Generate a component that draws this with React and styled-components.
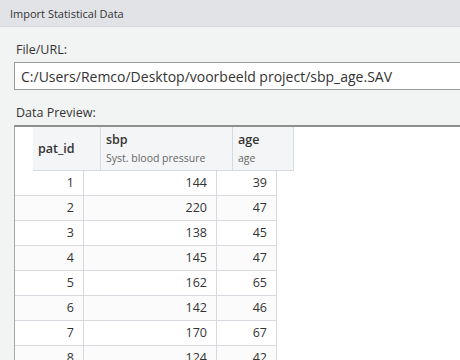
import React from 'react';
import styled, { createGlobalStyle } from 'styled-components';

const GlobalStyle = createGlobalStyle`
  html, body {
    margin: 0;
    padding: 0;
    background: #f2f3f3;
    font-family: "Open Sans", "Noto Sans", sans-serif;
    color: #333;
  }
`;

const Dialog = styled.div`
  width: 460px;
  height: 360px;
  overflow: hidden;
  background: #f2f3f3;
  display: flex;
  flex-direction: column;
`;

const TitleBar = styled.div`
  height: 26px;
  flex: none;
  background: #e2e3e7;
  border-bottom: 1px solid #d6d7da;
  display: flex;
  align-items: center;
  padding-left: 10px;
  font-size: 11px;
  color: #333;
`;

const Body = styled.div`
  padding: 14px 0 0 14px;
  display: flex;
  flex-direction: column;
`;

const Label = styled.div`
  font-size: 12.5px;
  color: #333;
  padding-left: 2px;
  height: 21px;
  line-height: 18px;
`;

const PathInput = styled.div`
  height: 26px;
  border: 1px solid #9a9a9a;
  border-right: none;
  background: #fff;
  display: flex;
  align-items: center;
  padding-left: 6px;
  font-size: 14px;
  color: #333;
  white-space: nowrap;
  margin-bottom: 14px;
`;

const Panel = styled.div`
  background: #fff;
  border-top: 2px solid #8e8e8e;
  border-left: 1px solid #a6a6a6;
  height: 260px;
  overflow: hidden;
`;

const HeaderRow = styled.div`
  display: flex;
  margin-left: 18px;
  height: 43px;
  background: #f4f5f6;
  border-bottom: 1px solid #d6dade;
  width: fit-content;
`;

const HeadCell = styled.div`
  width: ${(p) => p.$w}px;
  box-sizing: border-box;
  padding: 0 5px;
  border-right: 1px solid #d6dade;
  display: flex;
  flex-direction: column;
  justify-content: center;
`;

const HeadName = styled.div`
  font-weight: 600;
  font-size: 12.5px;
  color: #333;
  line-height: 17px;
`;

const HeadLabel = styled.div`
  font-size: 10.5px;
  color: #666;
  line-height: 17px;
  margin-top: 2px;
`;

const Row = styled.div`
  display: flex;
  height: 25px;
  width: fit-content;
  border-bottom: 1px solid #d6dade;
  box-sizing: border-box;
  background: ${(p) => (p.$alt ? '#fbfbfb' : '#fff')};
`;

const Cell = styled.div`
  width: ${(p) => p.$w}px;
  box-sizing: border-box;
  border-right: 1px solid #d6dade;
  padding-right: 9px;
  text-align: right;
  font-size: 12.5px;
  line-height: 24px;
  color: #333;
`;

const rows = [
  [1, 144, 39],
  [2, 220, 47],
  [3, 138, 45],
  [4, 145, 47],
  [5, 162, 65],
  [6, 142, 46],
  [7, 170, 67],
  [8, 124, 42],
];

const App = () => (
  <>
    <GlobalStyle />
    <Dialog>
      <TitleBar>Import Statistical Data</TitleBar>
      <Body>
        <Label>File/URL:</Label>
        <PathInput>C:/Users/Remco/Desktop/voorbeeld project/sbp_age.SAV</PathInput>
        <Label>Data Preview:</Label>
        <Panel>
          <HeaderRow>
            <HeadCell $w={68}>
              <HeadName>pat_id</HeadName>
            </HeadCell>
            <HeadCell $w={132}>
              <HeadName>sbp</HeadName>
              <HeadLabel>Syst. blood pressure</HeadLabel>
            </HeadCell>
            <HeadCell $w={61}>
              <HeadName>age</HeadName>
              <HeadLabel>age</HeadLabel>
            </HeadCell>
          </HeaderRow>
          {rows.map((r, i) => (
            <Row key={i} $alt={i % 2 === 1}>
              <Cell $w={69}>{r[0]}</Cell>
              <Cell $w={133}>{r[1]}</Cell>
              <Cell $w={60}>{r[2]}</Cell>
            </Row>
          ))}
        </Panel>
      </Body>
    </Dialog>
  </>
);

export default App;
